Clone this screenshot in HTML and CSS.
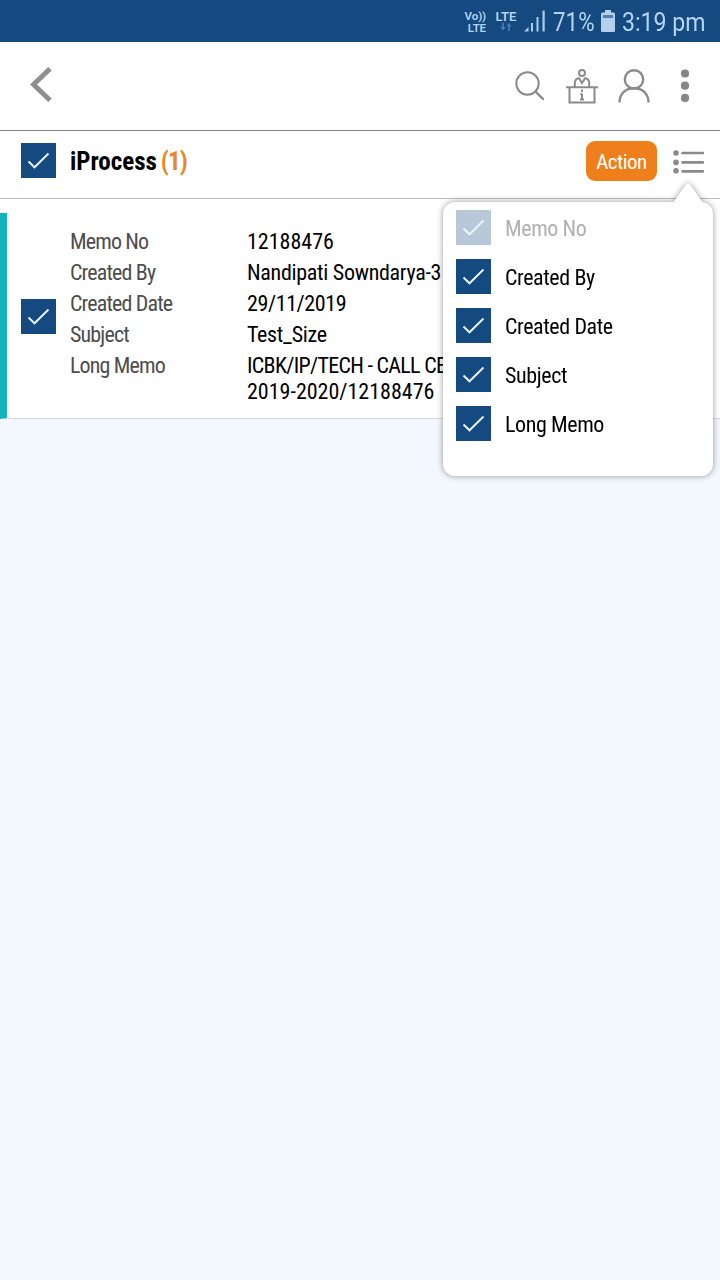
FILE: index.html
```html
<!DOCTYPE html>
<html lang="en">
<head>
  <meta charset="UTF-8" />
  <meta name="viewport" content="width=device-width, initial-scale=1.0" />
  <title>iProcess</title>
  <link rel="stylesheet" href="styles.css">
</head>
<body>
  <svg class="defs" width="0" height="0">
    <symbol id="check" viewBox="0 0 35 35">
      <path d="M7.5 18.5 L13.5 24.3 L27.5 10.5" fill="none" stroke="#e8f6ff" stroke-width="1.9" />
    </symbol>
  </svg>

  <div class="status-bar">
    <div class="volte"><span>Vo))</span><span>LTE</span></div>
    <div class="lte">
      <span>LTE</span>
      <svg width="12" height="8" viewBox="0 0 12 8">
        <path d="M3 0 V6 M9 2 V8" stroke="#4c80b3" stroke-width="1.6" />
        <path d="M0.5 4 H5.5 L3 7.5 Z M6.5 3.5 H11.5 L9 0 Z" fill="#4c80b3" />
      </svg>
    </div>
    <svg class="signal" width="22" height="22" viewBox="0 0 22 22" fill="#a9cdf0">
      <path d="M0 21.5 L4.5 17 V21.5 Z" />
      <rect x="7" y="13" width="2" height="8.5" />
      <rect x="12.5" y="7" width="2" height="14.5" />
      <rect x="18.5" y="0.5" width="2.2" height="21" />
    </svg>
    <span class="battery-text">71%</span>
    <svg class="battery" width="14" height="22" viewBox="0 0 14 22">
      <path d="M4 0 H10 V2.5 H12.5 Q14 2.5 14 4 V20.5 Q14 22 12.5 22 H1.5 Q0 22 0 20.5 V4 Q0 2.5 1.5 2.5 H4 Z" fill="#b5d0ec" />
      <rect x="2" y="5" width="10" height="3" fill="#557fab" />
    </svg>
    <span class="time">3:19 pm</span>
  </div>

  <div class="toolbar">
    <svg class="back" width="22" height="35" viewBox="0 0 22 35">
      <path d="M20 1.8 L3.5 17.5 L20 33.2" fill="none" stroke="#8f8f8f" stroke-width="5" />
    </svg>
    <svg class="search" width="30" height="30" viewBox="0 0 30 30" fill="none" stroke="#8a8a8a" stroke-width="2">
      <circle cx="12.5" cy="12.5" r="11.2" />
      <path d="M20.5 20.5 L28 28" stroke-width="2.4" stroke-linecap="round" />
    </svg>
    <svg class="desk" width="32" height="35" viewBox="0 0 32 35" fill="none" stroke="#8a8a8a" stroke-width="2">
      <circle cx="16" cy="4" r="3" />
      <path d="M8.8 18 V14.5 Q8.8 9.5 13 9.2 L16 14 L19 9.2 Q23.2 9.5 23.2 14.5 V18" />
      <path d="M0 18.2 H32 M3.5 18 V33.5 H28.5 V18" />
      <path d="M16 20.5 V23 M16 24.5 V31 M14.3 25.2 H16 M14 30.5 H18" stroke-width="2" />
    </svg>
    <svg class="user" width="32" height="34" viewBox="0 0 32 34" fill="none" stroke="#8a8a8a" stroke-width="2.4">
      <circle cx="16" cy="10.4" r="9.2" />
      <path d="M1.5 33.5 C1.5 24 8 19.2 16 19.2 S30.5 24 30.5 33.5" />
    </svg>
    <svg class="more" width="10" height="34" viewBox="0 0 10 34" fill="#868686">
      <circle cx="5" cy="4.5" r="4.1" />
      <circle cx="5" cy="16.7" r="4.1" />
      <circle cx="5" cy="28.9" r="4.1" />
    </svg>
  </div>

  <div class="title-bar">
    <svg class="checkbox"><use href="#check" /></svg>
    <h1>iProcess <span>(1)</span></h1>
    <button class="action">Action</button>
    <div class="columns">
      <svg class="list-icon" width="31" height="24" viewBox="0 0 31 24">
        <g fill="#8a8a8a"><circle cx="3" cy="3" r="2.8" /><circle cx="3" cy="12.4" r="2.8" /><circle cx="3" cy="20.8" r="2.8" /></g>
        <path d="M9.5 3 H30 M9.5 12.4 H30 M9.5 21.4 H30" stroke="#8a8a8a" stroke-width="2.6" stroke-linecap="round" />
      </svg>
      <div class="popup">
        <svg class="arrow" width="36" height="21" viewBox="0 0 36 21">
          <path d="M3 21 L15.5 3 Q18 0.5 20.5 3 L33 21 Z" fill="#fff" />
        </svg>
        <div class="option disabled"><svg class="checkbox"><use href="#check" /></svg><span>Memo No</span></div>
        <div class="option"><svg class="checkbox"><use href="#check" /></svg><span>Created By</span></div>
        <div class="option"><svg class="checkbox"><use href="#check" /></svg><span>Created Date</span></div>
        <div class="option"><svg class="checkbox"><use href="#check" /></svg><span>Subject</span></div>
        <div class="option"><svg class="checkbox"><use href="#check" /></svg><span>Long Memo</span></div>
      </div>
    </div>
  </div>

  <div class="list">
    <div class="memo">
      <svg class="checkbox"><use href="#check" /></svg>
      <dl>
        <dt>Memo No</dt><dd class="digits">12188476</dd>
        <dt>Created By</dt><dd>Nandipati Sowndarya-3</dd>
        <dt>Created Date</dt><dd class="date">29/11/2019</dd>
        <dt>Subject</dt><dd>Test_Size</dd>
        <dt>Long Memo</dt><dd class="long">ICBK/IP/TECH - CALL CE<br><span class="digits">2019-2020/12188476</span></dd>
      </dl>
    </div>
  </div>
</body>
</html>
```
FILE: styles.css
```css
* { box-sizing: border-box; }
body { margin: 0; min-height: 100vh; background: #f3f7fe; font-family: "Roboto Condensed", Roboto, sans-serif; font-stretch: condensed; font-size: 22px; color: #000; }
.defs { position: absolute; }
svg { display: block; flex: none; }

.status-bar { display: flex; align-items: center; height: 42px; padding-left: 464px; background: #144a7f; color: #b5d4f2; font-family: Roboto, sans-serif; font-stretch: normal; white-space: nowrap; }
.volte { width: 22px; margin-right: 9px; padding-top: 2px; font-size: 11.5px; font-weight: 600; line-height: 12px; text-align: right; letter-spacing: -0.1px; }
.volte span { display: block; }
.lte { display: flex; flex-direction: column; align-items: center; width: 22px; margin-right: 7px; font-size: 13px; font-weight: 600; line-height: 13px; }
.lte span { margin-top: -2px; }
.signal { margin-right: 7px; }
.battery-text { width: 48px; padding-top: 2px; font-size: 26px; transform: scaleX(0.86); transform-origin: left; }
.battery { margin-right: 7px; }
.time { padding-top: 2px; font-size: 26px; transform: scaleX(0.89); transform-origin: left; }

.toolbar { display: flex; align-items: center; height: 89px; padding-left: 30px; background: #fff; border-bottom: 1px solid #858585; }
.back { margin-right: 463px; margin-top: -3px; }
.search { margin-right: 21px; }
.desk { margin-right: 20px; }
.user { margin-right: 30px; }

.title-bar { display: flex; align-items: center; height: 68px; padding: 0 16px 7px 21px; background: #fff; border-bottom: 1px solid #bdbdbd; }
.checkbox { width: 35px; height: 35px; background: #144a7f; }
.title-bar > .checkbox { margin-top: -2px; }
h1 { flex: 1; margin: 0 0 0 14px; padding-top: 2px; font-size: 25px; line-height: 30px; word-spacing: -2px; }
h1 span { color: #e58a2c; letter-spacing: -0.8px; }
.action { width: 71px; height: 40px; padding: 1px 0 0; border: 0; border-radius: 9px; background: #ef7f1a; color: #fff; font: inherit; font-size: 21px; letter-spacing: -0.5px; }
.columns { position: relative; margin: 1px 0 0 16px; }

.popup { position: absolute; top: 52px; right: -9px; width: 270px; height: 274px; padding: 8px 13px; background: #fff; border-radius: 12px; filter: drop-shadow(0 0 3px rgba(0,0,0,0.4)); }
.arrow { position: absolute; top: -20px; right: 7px; }
.option { display: flex; align-items: center; gap: 14px; margin-bottom: 14px; letter-spacing: -0.4px; }
.option span { padding-top: 2px; }
.disabled .checkbox { background: #b8c8d9; }
.disabled span { color: #b0b0b0; }

.list { padding-top: 14px; background: #fff; }
.memo { display: flex; align-items: center; height: 206px; padding: 2px 0 0 14px; border-left: 7px solid #12b3bd; border-bottom: 1px solid #d5d9df; }
dl { display: grid; grid-template-columns: 177px 1fr; row-gap: 5px; margin: 0 0 0 14px; line-height: 26px; white-space: nowrap; }
dt { color: #4d4d4d; letter-spacing: -0.85px; }
dd { margin: 0; letter-spacing: -0.3px; }
.long { letter-spacing: -0.7px; }
.digits { letter-spacing: 0; }
.date { letter-spacing: -0.4px; }
```
